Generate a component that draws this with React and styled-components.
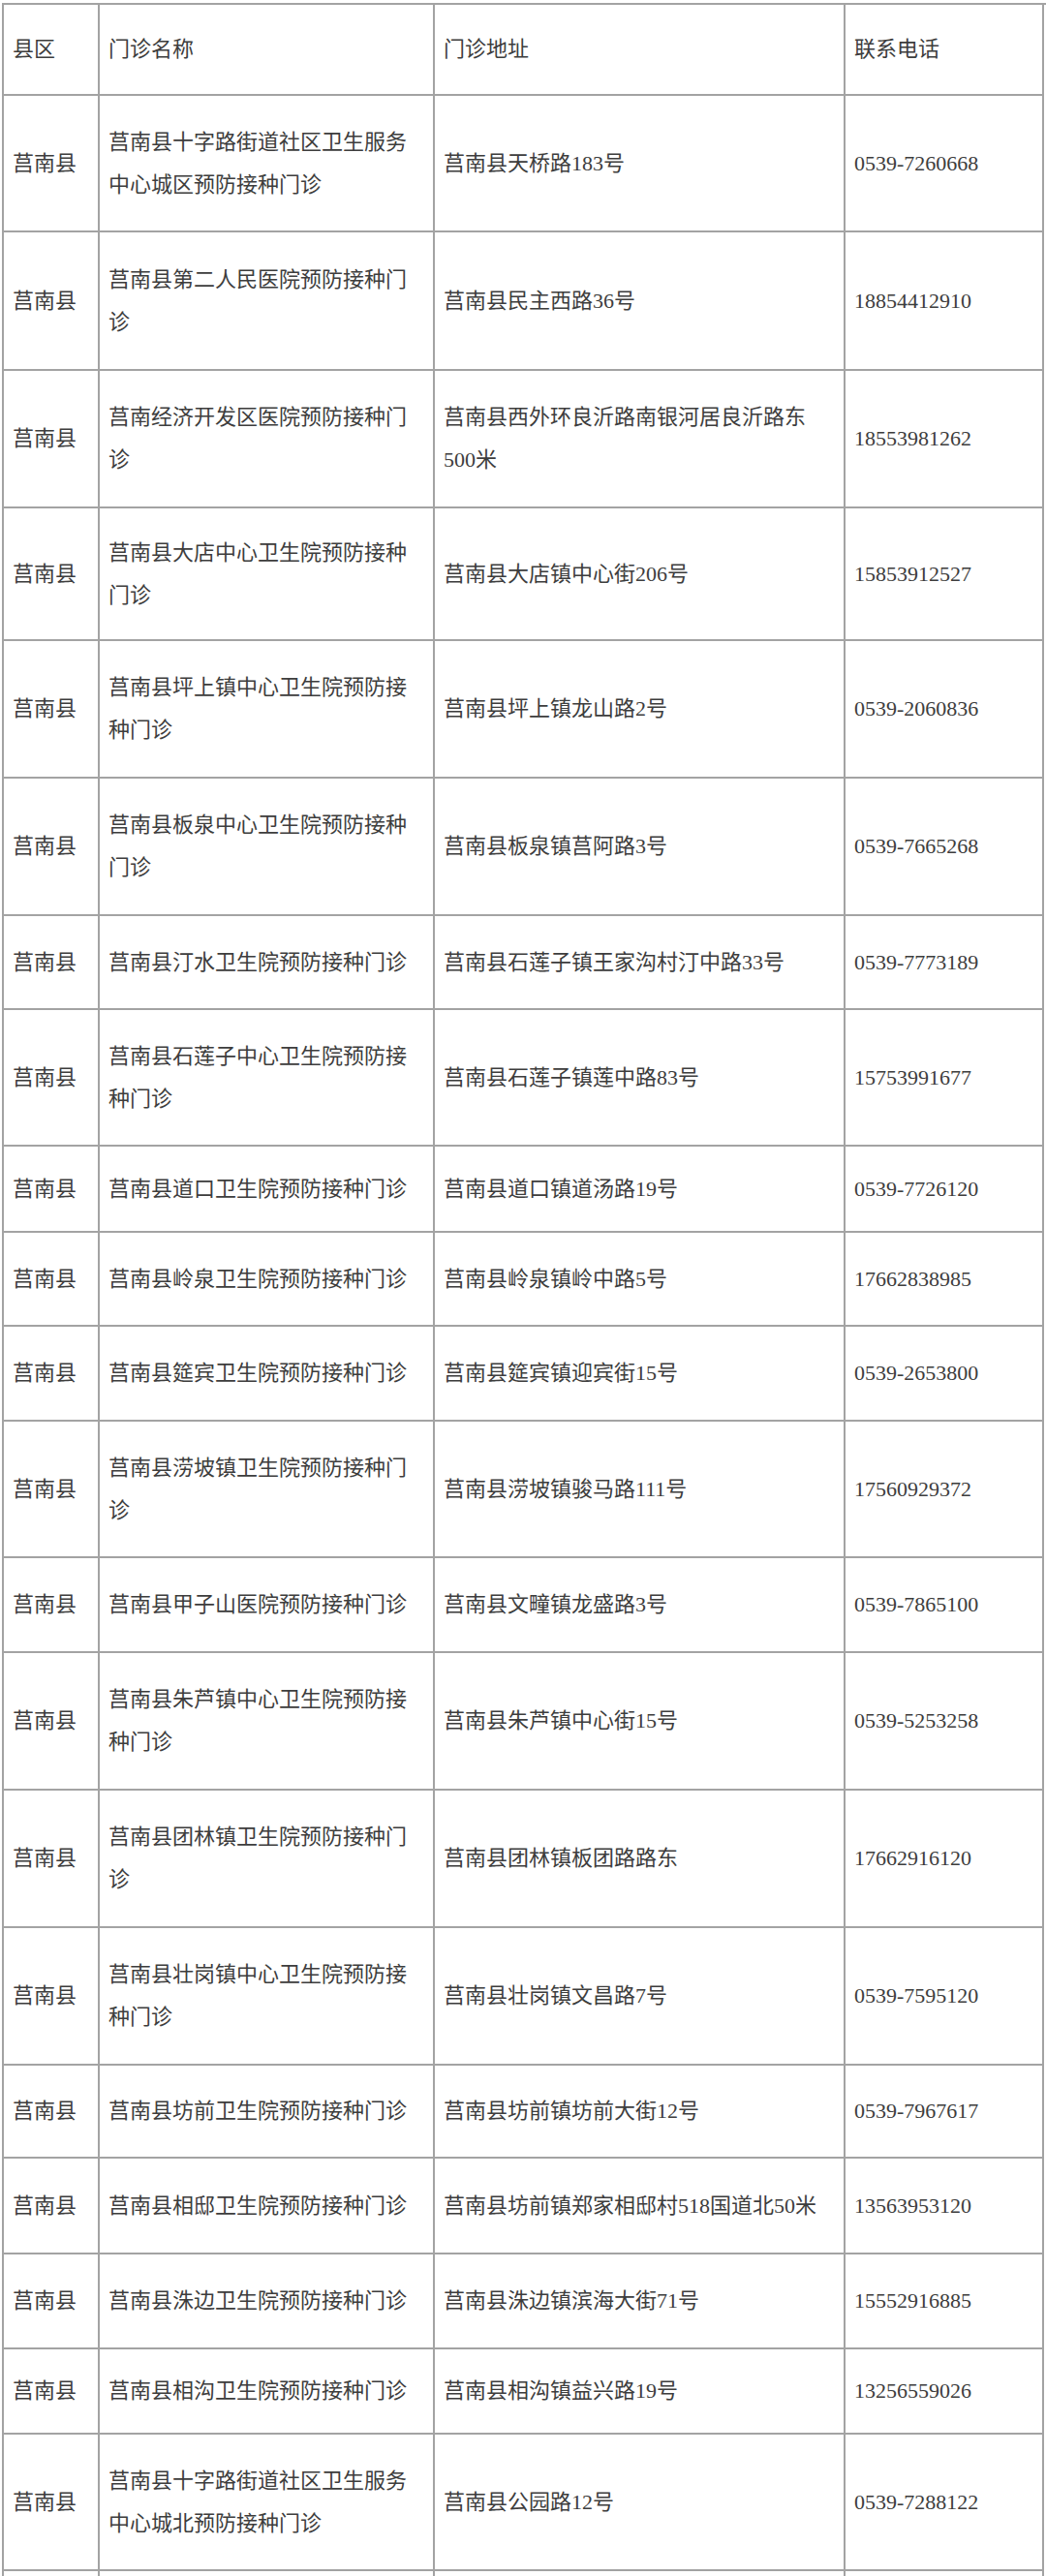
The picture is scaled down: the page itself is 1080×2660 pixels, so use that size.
import React from 'react';
import styled, { createGlobalStyle } from 'styled-components';

const GlobalStyle = createGlobalStyle`
  html, body {
    margin: 0;
    padding: 0;
    background: #ffffff;
  }
  body {
    font-family: "Liberation Serif", "Noto Sans CJK SC", serif;
    color: #3d3d3d;
  }
`;

const COLS = '99px 346px 424px 205px';
const LINE = '#a3a3a3';

const Sheet = styled.div`
  width: 1076px;
  margin: 3px 0 0 2px;
  border-left: 2px solid ${LINE};
  border-top: 2px solid ${LINE};
`;

const Row = styled.div`
  display: grid;
  grid-template-columns: ${COLS};
  height: ${(p) => p.$h}px;
`;

const Cell = styled.div`
  display: flex;
  flex-direction: column;
  justify-content: center;
  padding: 0 8px 0 9px;
  border-right: 2px solid ${LINE};
  border-bottom: 2px solid ${LINE};
  font-size: 22px;
  line-height: 44px;
  overflow: hidden;
`;

const Line = styled.span`
  display: block;
  white-space: nowrap;
`;

const header = { h: 94, cells: [['县区'], ['门诊名称'], ['门诊地址'], ['联系电话']] };

const rows = [
  { h: 141, name: ['莒南县十字路街道社区卫生服务', '中心城区预防接种门诊'], addr: ['莒南县天桥路183号'], tel: '0539-7260668' },
  { h: 143, name: ['莒南县第二人民医院预防接种门', '诊'], addr: ['莒南县民主西路36号'], tel: '18854412910' },
  { h: 142, name: ['莒南经济开发区医院预防接种门', '诊'], addr: ['莒南县西外环良沂路南银河居良沂路东', '500米'], tel: '18553981262' },
  { h: 137, name: ['莒南县大店中心卫生院预防接种', '门诊'], addr: ['莒南县大店镇中心街206号'], tel: '15853912527' },
  { h: 142, name: ['莒南县坪上镇中心卫生院预防接', '种门诊'], addr: ['莒南县坪上镇龙山路2号'], tel: '0539-2060836' },
  { h: 142, name: ['莒南县板泉中心卫生院预防接种', '门诊'], addr: ['莒南县板泉镇莒阿路3号'], tel: '0539-7665268' },
  { h: 97, name: ['莒南县汀水卫生院预防接种门诊'], addr: ['莒南县石莲子镇王家沟村汀中路33号'], tel: '0539-7773189' },
  { h: 141, name: ['莒南县石莲子中心卫生院预防接', '种门诊'], addr: ['莒南县石莲子镇莲中路83号'], tel: '15753991677' },
  { h: 89, name: ['莒南县道口卫生院预防接种门诊'], addr: ['莒南县道口镇道汤路19号'], tel: '0539-7726120' },
  { h: 97, name: ['莒南县岭泉卫生院预防接种门诊'], addr: ['莒南县岭泉镇岭中路5号'], tel: '17662838985' },
  { h: 98, name: ['莒南县筵宾卫生院预防接种门诊'], addr: ['莒南县筵宾镇迎宾街15号'], tel: '0539-2653800' },
  { h: 141, name: ['莒南县涝坡镇卫生院预防接种门', '诊'], addr: ['莒南县涝坡镇骏马路111号'], tel: '17560929372' },
  { h: 98, name: ['莒南县甲子山医院预防接种门诊'], addr: ['莒南县文疃镇龙盛路3号'], tel: '0539-7865100' },
  { h: 142, name: ['莒南县朱芦镇中心卫生院预防接', '种门诊'], addr: ['莒南县朱芦镇中心街15号'], tel: '0539-5253258' },
  { h: 142, name: ['莒南县团林镇卫生院预防接种门', '诊'], addr: ['莒南县团林镇板团路路东'], tel: '17662916120' },
  { h: 142, name: ['莒南县壮岗镇中心卫生院预防接', '种门诊'], addr: ['莒南县壮岗镇文昌路7号'], tel: '0539-7595120' },
  { h: 96, name: ['莒南县坊前卫生院预防接种门诊'], addr: ['莒南县坊前镇坊前大街12号'], tel: '0539-7967617' },
  { h: 99, name: ['莒南县相邸卫生院预防接种门诊'], addr: ['莒南县坊前镇郑家相邸村518国道北50米'], tel: '13563953120' },
  { h: 98, name: ['莒南县洙边卫生院预防接种门诊'], addr: ['莒南县洙边镇滨海大街71号'], tel: '15552916885' },
  { h: 88, name: ['莒南县相沟卫生院预防接种门诊'], addr: ['莒南县相沟镇益兴路19号'], tel: '13256559026' },
  { h: 141, name: ['莒南县十字路街道社区卫生服务', '中心城北预防接种门诊'], addr: ['莒南县公园路12号'], tel: '0539-7288122' },
];

const Lines = ({ list }) => list.map((t, i) => <Line key={i}>{t}</Line>);

const App = () => {
  return (
    <>
      <GlobalStyle />
      <Sheet>
        <Row $h={header.h}>
          {header.cells.map((c, i) => (
            <Cell key={i}>
              <Lines list={c} />
            </Cell>
          ))}
        </Row>
        {rows.map((r, i) => (
          <Row key={i} $h={r.h}>
            <Cell>
              <Line>莒南县</Line>
            </Cell>
            <Cell>
              <Lines list={r.name} />
            </Cell>
            <Cell>
              <Lines list={r.addr} />
            </Cell>
            <Cell>
              <Line>{r.tel}</Line>
            </Cell>
          </Row>
        ))}
        <Row $h={96}>
          <Cell />
          <Cell />
          <Cell />
          <Cell />
        </Row>
      </Sheet>
    </>
  );
};

export default App;
